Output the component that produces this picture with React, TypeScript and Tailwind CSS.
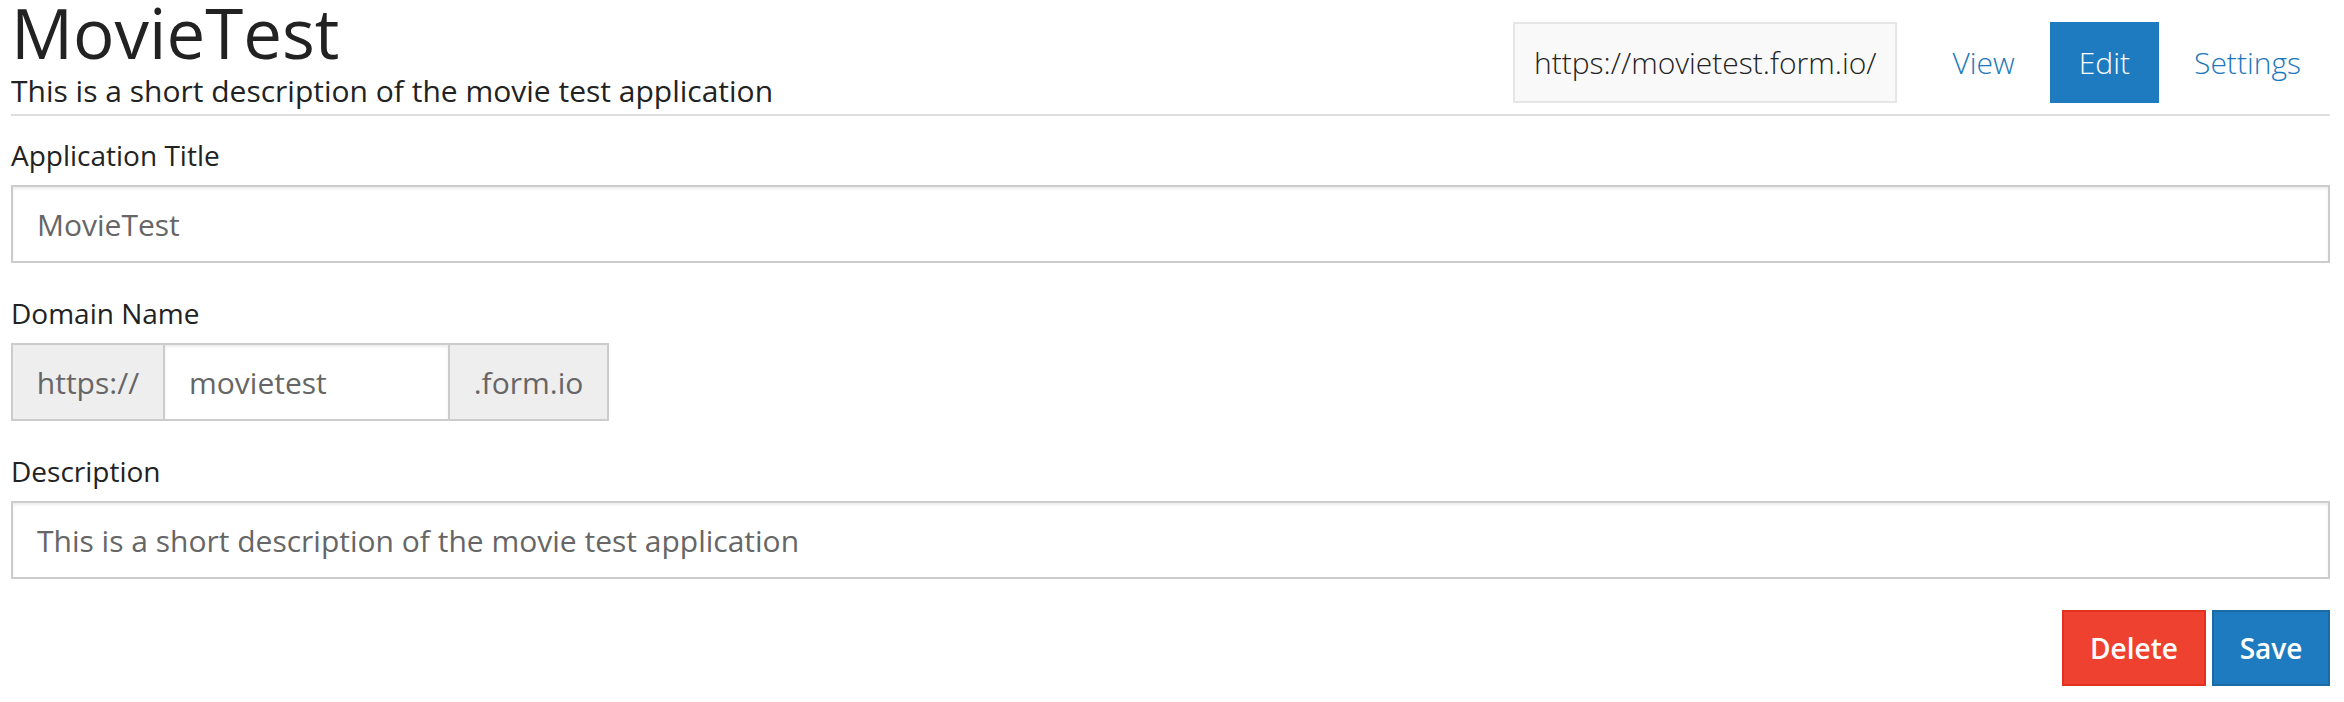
import React from "react";

// Form.io style application settings page
const font = { fontFamily: '"Open Sans", "Liberation Sans", sans-serif' };

function Field({ label, children }: { label: string; children: React.ReactNode }) {
  return (
    <div className="mb-[32px]">
      <label className="block text-[28px] leading-[36px] text-[#222] mb-[12px]">{label}</label>
      {children}
    </div>
  );
}

export default function App() {
  return (
    <div className="bg-white min-h-[702px] pl-[11px] pr-[14px]" style={font}>
      {/* Header */}
      <div className="flex justify-between items-start h-[116px] border-b-2 border-[#dddddd]">
        <div className="flex flex-col pt-[2px]">
          <h1 className="text-[69px] leading-[60px] text-[#222] font-normal">MovieTest</h1>
          <p className="text-[30px] leading-[40px] text-[#222] mt-[9px]">
            This is a short description of the movie test application
          </p>
        </div>
        <div className="flex items-center mt-[22px]">
          <div className="h-[81px] flex items-center bg-[#f9f9f9] border-2 border-[#e6e6e6] pl-[19px] pr-[18px] text-[30px] text-[#222] font-light mr-[27px]">
            https://movietest.form.io/
          </div>
          <nav className="flex gap-[6px]">
            <a className="h-[81px] flex items-center px-[29px] text-[30px] text-[#1c78bd] font-light">View</a>
            <a className="h-[81px] flex items-center px-[29px] text-[30px] text-white bg-[#1f7bbf] font-light">Edit</a>
            <a className="h-[81px] flex items-center px-[29px] text-[30px] text-[#1c78bd] font-light">Settings</a>
          </nav>
        </div>
      </div>

      {/* Form */}
      <div className="pt-[21px]">
        <Field label="Application Title">
          <div className="h-[78px] flex items-center border-2 border-[#cccccc] shadow-[inset_0_2px_3px_rgba(0,0,0,0.075)] px-[24px] text-[30px] text-[#666]">
            MovieTest
          </div>
        </Field>

        <Field label="Domain Name">
          <div className="flex h-[78px] w-[598px] text-[30px] text-[#666]">
            <div className="w-[154px] flex items-center justify-center bg-[#eeeeee] border-2 border-[#cccccc]">https://</div>
            <div className="w-[283px] flex items-center px-[24px] border-y-2 border-[#cccccc] shadow-[inset_0_2px_3px_rgba(0,0,0,0.075)]">movietest</div>
            <div className="w-[161px] flex items-center justify-center bg-[#eeeeee] border-2 border-[#cccccc]">.form.io</div>
          </div>
        </Field>

        <Field label="Description">
          <div className="h-[78px] flex items-center border-2 border-[#cccccc] shadow-[inset_0_2px_3px_rgba(0,0,0,0.075)] px-[24px] text-[30px] text-[#666]">
            This is a short description of the movie test application
          </div>
        </Field>

        <div className="flex justify-end gap-[6px] -mt-[1px]">
          <button className="h-[76px] w-[144px] bg-[#ef4130] border-2 border-[#e4311f] text-white text-[28px] font-semibold">
            Delete
          </button>
          <button className="h-[76px] w-[118px] bg-[#1f7bbf] border-2 border-[#1a6aa5] text-white text-[28px] font-semibold">
            Save
          </button>
        </div>
      </div>
    </div>
  );
}
